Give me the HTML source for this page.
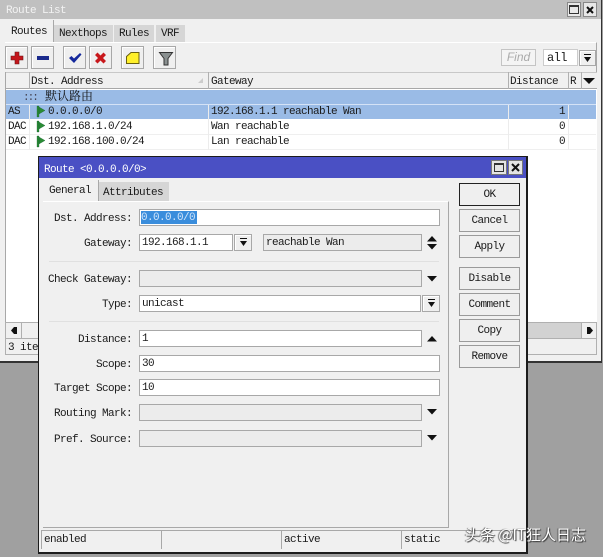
<!DOCTYPE html>
<html><head><meta charset="utf-8">
<style>
html,body{margin:0;padding:0}
body{width:603px;height:557px;background:#a0a0a0;position:relative;overflow:hidden;font-family:"Liberation Mono","Noto Serif CJK SC",monospace;font-size:11px;letter-spacing:-.6px;color:#1a1a1a}
div,span.a{position:absolute;box-sizing:border-box}
svg{position:absolute;overflow:visible}
.t{white-space:pre;line-height:14px;height:14px}
.r{text-align:right}
.btn{background:#efefef;border:1px solid #a8a8a8;box-shadow:inset 1px 1px 0 #fff}
.f{background:#fff;border:1px solid #a8a8a8;line-height:17px;padding-left:2px;white-space:pre}
.g{background:#ececec;border:1px solid #a8a8a8;line-height:17px;padding-left:2px;white-space:pre}
.db{text-align:center;line-height:22px;background:#efefef;border:1px solid #9a9a9a;left:459px;width:61px;height:23px}
</style></head><body>

<!-- Route List window -->
<div style="left:0;top:0;width:602px;height:363px;background:#f0f0f0;border-right:1px solid #333;border-bottom:2px solid #333"></div>
<div style="left:0;top:0;width:601px;height:19px;background:#c0c0c0"></div>
<div class="t" style="left:6px;top:4px;color:#f2f2f2">Route List</div>
<div style="left:567px;top:2px;width:14px;height:15px;background:#e8e8e8;border:1px solid #888"></div>
<div style="left:569px;top:5px;width:10px;height:9px;border:1px solid #333;border-top-width:2px"></div>
<div style="left:583px;top:2px;width:14px;height:15px;background:#e8e8e8;border:1px solid #888"></div>
<svg style="left:586px;top:6px" width="8" height="8"><path d="M1 1L7 7M7 1L1 7" stroke="#111" stroke-width="2"/></svg>

<!-- tabs -->
<div style="left:5px;top:42px;width:592px;height:297px;border-top:1px solid #fff;border-right:1px solid #a8a8a8"></div>
<div style="left:54px;top:25px;width:59px;height:17px;background:#d6d6d6"></div>
<div style="left:114px;top:25px;width:40px;height:17px;background:#d6d6d6"></div>
<div style="left:156px;top:25px;width:29px;height:17px;background:#d6d6d6"></div>
<div style="left:53px;top:20px;width:1px;height:22px;background:#a8a8a8"></div>
<div class="t" style="left:11px;top:25px">Routes</div>
<div class="t" style="left:59px;top:27px">Nexthops</div>
<div class="t" style="left:119px;top:27px">Rules</div>
<div class="t" style="left:161px;top:27px">VRF</div>

<!-- toolbar -->
<div class="btn" style="left:5px;top:46px;width:23px;height:23px"></div>
<div class="btn" style="left:31px;top:46px;width:23px;height:23px"></div>
<div class="btn" style="left:63px;top:46px;width:23px;height:23px"></div>
<div class="btn" style="left:89px;top:46px;width:23px;height:23px"></div>
<div class="btn" style="left:121px;top:46px;width:23px;height:23px"></div>
<div class="btn" style="left:153px;top:46px;width:23px;height:23px"></div>
<svg style="left:0;top:40px" width="190" height="30">
<path d="M15 12h4v4h4v4h-4v4h-4v-4h-4v-4h4z" fill="#c4161c" stroke="#6a1414" stroke-width=".6"/>
<rect x="37" y="16" width="12" height="4" fill="#1a2a8c"/>
<path d="M69 18l2.500-2 2.500 2.500 6-5.500 1.500 1.500-7.500 8.500z" fill="#14289c"/>
<path d="M95 15l2.500-2.500 3 3 3-3 2.500 2.500-3 3 3 3-2.500 2.500-3-3-3 3-2.500-2.500 3-3z" fill="#c8181c"/>
<path d="M126.500 16.500l4.500-4h8v11h-12.500z" fill="#fff02a" stroke="#6a6010"/>
<path d="M159.500 12.500h13l-4.500 6v6.500h-4v-6.500z" fill="#8a9090" stroke="#333"/>
</svg>
<div style="left:501px;top:49px;width:35px;height:17px;background:#f4f4f4;border:1px solid #c4c4c4;color:#aaa;font-family:'Liberation Sans',sans-serif;font-style:italic;font-size:12px;letter-spacing:0;text-align:center;line-height:15px">Find</div>
<div class="f" style="left:543px;top:49px;width:35px;height:17px;border-color:#ccc;font-size:12px;line-height:16px;padding-left:3px">all</div>
<div class="btn" style="left:579px;top:50px;width:17px;height:16px"></div>
<svg style="left:583px;top:54px" width="10" height="9"><path d="M1 0h7v1H1zM1 3h7L4.500 8z" fill="#111"/></svg>

<!-- table -->
<div style="left:5px;top:72px;width:592px;height:250px;background:#fff;border-left:1px solid #a8a8a8"></div>
<div style="left:6px;top:72px;width:591px;height:17px;background:#f0f0f0;border-top:1px solid #c8c8c8;border-bottom:1px solid #a8a8a8"></div>
<div style="left:29px;top:72px;width:1px;height:17px;background:#b0b0b0"></div>
<div style="left:208px;top:72px;width:1px;height:17px;background:#b0b0b0"></div>
<div style="left:508px;top:72px;width:1px;height:17px;background:#b0b0b0"></div>
<div style="left:568px;top:72px;width:1px;height:17px;background:#b0b0b0"></div>
<div style="left:581px;top:72px;width:1px;height:17px;background:#b0b0b0"></div>
<div class="t" style="left:31px;top:75px">Dst. Address</div>
<div class="t" style="left:211px;top:75px">Gateway</div>
<div class="t" style="left:510px;top:75px">Distance</div>
<div class="t" style="left:570px;top:75px">R</div>
<svg style="left:198px;top:78px" width="6" height="6"><path d="M5 0L0 5h5z" fill="#ccc"/></svg>
<svg style="left:582px;top:78px" width="14" height="7"><path d="M1 0h12L7 6z" fill="#111"/></svg>

<div style="left:6px;top:90px;width:590px;height:14px;background:#9abbe6"></div>
<div style="left:6px;top:105px;width:590px;height:14px;background:#9abbe6"></div>
<div style="left:6px;top:104px;width:590px;height:1px;background:#d4e2f6"></div>
<div style="left:6px;top:134px;width:590px;height:1px;background:#efefef"></div>
<div style="left:6px;top:149px;width:590px;height:1px;background:#efefef"></div>
<div style="left:29px;top:105px;width:1px;height:45px;background:#ececec"></div>
<div style="left:208px;top:105px;width:1px;height:45px;background:#ececec"></div>
<div style="left:508px;top:105px;width:1px;height:45px;background:#ececec"></div>
<div style="left:568px;top:105px;width:1px;height:45px;background:#ececec"></div>

<div class="t" style="left:23px;top:91px;font-size:11px;letter-spacing:-2px;color:#445">:::</div>
<div class="t" style="left:45px;top:89px;font-family:'Noto Serif CJK SC',serif;font-size:12px;letter-spacing:0;color:#111">默认路由</div>

<div class="t" style="left:8px;top:105px">AS</div>
<div class="t" style="left:8px;top:120px">DAC</div>
<div class="t" style="left:8px;top:135px">DAC</div>
<svg style="left:37px;top:106px" width="10" height="42">
<g fill="#2a8c34" stroke="#153"  stroke-width=".3"><path d="M0 0h2v11H0zM2 1l6 3.500-6 3.500z"/><path d="M0 15h2v11H0zM2 16l6 3.500-6 3.500z"/><path d="M0 30h2v11H0zM2 31l6 3.500-6 3.500z"/></g></svg>
<div class="t" style="left:48px;top:105px">0.0.0.0/0</div>
<div class="t" style="left:48px;top:120px">192.168.1.0/24</div>
<div class="t" style="left:48px;top:135px">192.168.100.0/24</div>
<div class="t" style="left:211px;top:105px">192.168.1.1 reachable Wan</div>
<div class="t" style="left:211px;top:120px">Wan reachable</div>
<div class="t" style="left:211px;top:135px">Lan reachable</div>
<div class="t" style="left:559px;top:105px">1</div>
<div class="t" style="left:559px;top:120px">0</div>
<div class="t" style="left:559px;top:135px">0</div>

<!-- scrollbar/status -->
<div style="left:5px;top:322px;width:592px;height:17px;background:#f0f0f0;border:1px solid #b0b0b0"></div>
<div style="left:527px;top:323px;width:54px;height:15px;background:#d2d2d2"></div>
<div style="left:21px;top:323px;width:1px;height:15px;background:#b0b0b0"></div>
<div style="left:581px;top:323px;width:1px;height:15px;background:#b0b0b0"></div>
<svg style="left:11px;top:326px" width="8" height="9"><path d="M0 4.500L3 1h3v7H3z" fill="#111"/></svg>
<svg style="left:586px;top:326px" width="8" height="9"><path d="M7 4.500L4 1H1v7h3z" fill="#111"/></svg>
<div style="left:5px;top:339px;width:592px;height:16px;border-left:1px solid #b0b0b0;border-right:1px solid #b0b0b0;border-bottom:1px solid #b0b0b0"></div>
<div class="t" style="left:8px;top:341px">3 ite</div>

<!-- Dialog -->
<div style="left:38px;top:156px;width:490px;height:398px;background:#f0f0f0;border:1px solid #1c1c1c;border-right-width:2px;border-bottom-width:2px"></div>
<div style="left:39px;top:157px;width:487px;height:21px;background:#4a50c4"></div>
<div class="t" style="left:44px;top:163px;color:#fff">Route &lt;0.0.0.0/0&gt;</div>
<div style="left:491px;top:160px;width:16px;height:15px;background:#e4e4e4;border:1px solid #777"></div>
<div style="left:494px;top:163px;width:10px;height:9px;border:1px solid #333;border-top-width:2px"></div>
<div style="left:508px;top:160px;width:15px;height:15px;background:#e4e4e4;border:1px solid #777"></div>
<svg style="left:511px;top:163px" width="9" height="9"><path d="M1 1L8 8M8 1L1 8" stroke="#111" stroke-width="2"/></svg>

<!-- dialog tabs/panel -->
<div style="left:43px;top:201px;width:406px;height:327px;border-top:1px solid #fff;border-right:1px solid #a8a8a8;border-bottom:1px solid #a8a8a8"></div>
<div style="left:99px;top:182px;width:70px;height:19px;background:#d6d6d6"></div>
<div style="left:98px;top:180px;width:1px;height:21px;background:#a8a8a8"></div>
<div class="t" style="left:49px;top:184px">General</div>
<div class="t" style="left:103px;top:186px">Attributes</div>

<!-- labels -->
<div class="t r" style="left:40px;top:212px;width:92px">Dst. Address:</div>
<div class="t r" style="left:40px;top:237px;width:92px">Gateway:</div>
<div class="t r" style="left:40px;top:273px;width:92px">Check Gateway:</div>
<div class="t r" style="left:40px;top:298px;width:92px">Type:</div>
<div class="t r" style="left:40px;top:333px;width:92px">Distance:</div>
<div class="t r" style="left:40px;top:358px;width:92px">Scope:</div>
<div class="t r" style="left:40px;top:382px;width:92px">Target Scope:</div>
<div class="t r" style="left:40px;top:407px;width:92px">Routing Mark:</div>
<div class="t r" style="left:40px;top:433px;width:92px">Pref. Source:</div>

<!-- fields -->
<div class="f" style="left:139px;top:209px;width:301px;height:17px"></div>
<div style="left:141px;top:211px;width:56px;height:13px;background:#3a8ddc"></div>
<div class="t" style="left:141px;top:211px;color:#cfe4fa">0.0.0.0/0</div>
<div class="f" style="left:139px;top:234px;width:94px;height:17px">192.168.1.1</div>
<div class="btn" style="left:234px;top:234px;width:18px;height:17px"></div>
<svg style="left:239px;top:238px" width="9" height="9"><path d="M1 0h7v1H1zM1 3h7L4.500 8z" fill="#111"/></svg>
<div class="g" style="left:263px;top:234px;width:159px;height:17px">reachable Wan</div>
<svg style="left:427px;top:236px" width="10" height="14"><path d="M0 5.500L5 0l5 5.500zM0 8h10l-5 5.500z" fill="#111"/></svg>
<div style="left:49px;top:261px;width:390px;height:1px;background:#e0e0e0"></div>
<div class="g" style="left:139px;top:270px;width:283px;height:17px"></div>
<svg style="left:427px;top:276px" width="10" height="6"><path d="M0 0h10L5 5.500z" fill="#111"/></svg>
<div class="f" style="left:139px;top:295px;width:282px;height:17px">unicast</div>
<div class="btn" style="left:422px;top:295px;width:18px;height:17px"></div>
<svg style="left:427px;top:299px" width="9" height="9"><path d="M1 0h7v1H1zM1 3h7L4.500 8z" fill="#111"/></svg>
<div style="left:49px;top:321px;width:390px;height:1px;background:#e0e0e0"></div>
<div class="f" style="left:139px;top:330px;width:283px;height:17px">1</div>
<svg style="left:427px;top:336px" width="10" height="6"><path d="M0 5.500h10L5 0z" fill="#111"/></svg>
<div class="f" style="left:139px;top:355px;width:301px;height:17px">30</div>
<div class="f" style="left:139px;top:379px;width:301px;height:17px">10</div>
<div class="g" style="left:139px;top:404px;width:283px;height:17px"></div>
<svg style="left:427px;top:409px" width="10" height="6"><path d="M0 0h10L5 5.500z" fill="#111"/></svg>
<div class="g" style="left:139px;top:430px;width:283px;height:17px"></div>
<svg style="left:427px;top:435px" width="10" height="6"><path d="M0 0h10L5 5.500z" fill="#111"/></svg>

<!-- dialog buttons -->
<div class="db" style="top:183px;border-color:#222">OK</div>
<div class="db" style="top:209px">Cancel</div>
<div class="db" style="top:235px">Apply</div>
<div class="db" style="top:267px">Disable</div>
<div class="db" style="top:293px">Comment</div>
<div class="db" style="top:319px">Copy</div>
<div class="db" style="top:345px">Remove</div>

<!-- dialog status -->
<div style="left:41px;top:530px;width:484px;height:1px;background:#a8a8a8"></div>
<div style="left:41px;top:530px;width:1px;height:19px;background:#a8a8a8"></div>
<div style="left:161px;top:530px;width:1px;height:19px;background:#a8a8a8"></div>
<div style="left:281px;top:530px;width:1px;height:19px;background:#a8a8a8"></div>
<div style="left:401px;top:530px;width:1px;height:19px;background:#a8a8a8"></div>
<div class="t" style="left:44px;top:533px">enabled</div>
<div class="t" style="left:284px;top:533px">active</div>
<div class="t" style="left:404px;top:533px">static</div>

<!-- watermark -->
<div style="left:465px;top:525px;width:135px;height:20px;white-space:pre;font-family:'Noto Sans CJK SC',sans-serif;font-size:15px;letter-spacing:0;line-height:20px;color:#fff;text-shadow:1px 1px 1px #333,-1px 0 1px #555">头条 @IT狂人日志</div>
</body></html>
